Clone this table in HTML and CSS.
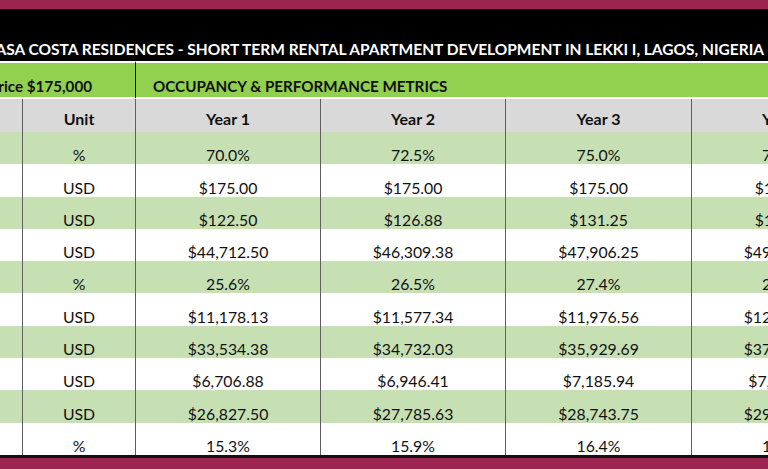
FILE: index.html
```html
<!DOCTYPE html>
<html lang="en">
<head>
<meta charset="utf-8">
<title>Casa Costa Residences - Occupancy &amp; Performance Metrics</title>
<link rel="stylesheet" href="styles.css">
</head>
<body>
<div class="sheet">
  <div class="band band-top"></div>
  <div class="title-bar">
    <span class="title">CASA COSTA RESIDENCES - SHORT TERM RENTAL APARTMENT DEVELOPMENT IN LEKKI I, LAGOS, NIGERIA</span>
  </div>
  <div class="grid">
    <div class="sec sec-price"><span>Purchase Price $175,000</span></div>
    <div class="sec sec-metrics">OCCUPANCY &amp; PERFORMANCE METRICS</div>

    <div class="cell head c1"></div>
    <div class="cell head c2">Unit</div>
    <div class="cell head c3">Year 1</div>
    <div class="cell head c4">Year 2</div>
    <div class="cell head c5">Year 3</div>
    <div class="cell head c6">Year 4</div>

    <div class="cell g c1"></div><div class="cell g c2">%</div><div class="cell g c3">70.0%</div><div class="cell g c4">72.5%</div><div class="cell g c5">75.0%</div><div class="cell g c6">77.5%</div>
    <div class="cell w c1"></div><div class="cell w c2">USD</div><div class="cell w c3">$175.00</div><div class="cell w c4">$175.00</div><div class="cell w c5">$175.00</div><div class="cell w c6">$175.00</div>
    <div class="cell g c1"></div><div class="cell g c2">USD</div><div class="cell g c3">$122.50</div><div class="cell g c4">$126.88</div><div class="cell g c5">$131.25</div><div class="cell g c6">$135.63</div>
    <div class="cell w c1"></div><div class="cell w c2">USD</div><div class="cell w c3">$44,712.50</div><div class="cell w c4">$46,309.38</div><div class="cell w c5">$47,906.25</div><div class="cell w c6">$49,503.13</div>
    <div class="cell g c1"></div><div class="cell g c2">%</div><div class="cell g c3">25.6%</div><div class="cell g c4">26.5%</div><div class="cell g c5">27.4%</div><div class="cell g c6">28.3%</div>
    <div class="cell w c1"></div><div class="cell w c2">USD</div><div class="cell w c3">$11,178.13</div><div class="cell w c4">$11,577.34</div><div class="cell w c5">$11,976.56</div><div class="cell w c6">$12,375.78</div>
    <div class="cell g c1"></div><div class="cell g c2">USD</div><div class="cell g c3">$33,534.38</div><div class="cell g c4">$34,732.03</div><div class="cell g c5">$35,929.69</div><div class="cell g c6">$37,127.34</div>
    <div class="cell w c1"></div><div class="cell w c2">USD</div><div class="cell w c3">$6,706.88</div><div class="cell w c4">$6,946.41</div><div class="cell w c5">$7,185.94</div><div class="cell w c6">$7,425.47</div>
    <div class="cell g c1"></div><div class="cell g c2">USD</div><div class="cell g c3">$26,827.50</div><div class="cell g c4">$27,785.63</div><div class="cell g c5">$28,743.75</div><div class="cell g c6">$29,701.88</div>
    <div class="cell w c1"></div><div class="cell w c2">%</div><div class="cell w c3">15.3%</div><div class="cell w c4">15.9%</div><div class="cell w c5">16.4%</div><div class="cell w c6">17.0%</div>
  </div>
  <div class="band-bottom-line"></div>
  <div class="band band-bottom"></div>
</div>
</body>
</html>
```

FILE: styles.css
```css
* { box-sizing: border-box; }
html, body { margin: 0; padding: 0; background: #ffffff; }
body {
  width: 768px;
  height: 469px;
  overflow: hidden;
  font-family: "Lato", "Liberation Sans", sans-serif;
  color: #111111;
}
.sheet {
  width: 768px;
  height: 469px;
  overflow: hidden;
  display: flex;
  flex-direction: column;
}
.band { background: #9b2451; flex: none; }
.band-top { height: 10px; border-bottom: 1px solid #2a0a14; }
.band-bottom { height: 10px; flex: 1 1 auto; }
.band-bottom-line { height: 3px; background: #111111; flex: none; }

.title-bar {
  height: 51px;
  background: #000000;
  display: flex;
  justify-content: flex-end;
  align-items: flex-end;
  padding-right: 4px;
  padding-bottom: 2px;
  overflow: hidden;
  white-space: nowrap;
  flex: none;
}
.title {
  color: #ffffff;
  font-weight: 700;
  font-size: 15.5px;
  line-height: 20px;
}

.grid {
  width: 876px;
  display: grid;
  grid-template-columns: 22px 113px 185px 185px 186px 185px;
  grid-template-rows: 38px 33px repeat(10, 32.3px);
  flex: none;
}
.sec {
  background: #92d050;
  border-top: 2px solid #ffffff;
  border-bottom: 2px solid #ffffff;
  font-weight: 700;
  font-size: 15.2px;
  line-height: 20px;
  display: flex;
  align-items: flex-end;
  padding-bottom: 1px;
  white-space: nowrap;
  overflow: hidden;
  color: #111111;
}
.sec-price {
  grid-column: 1 / 3;
  justify-content: flex-end;
  padding-right: 43px;
}
.sec-metrics {
  grid-column: 3 / 7;
  border-left: 1px solid #000000;
  padding-left: 17px;
}

.cell {
  display: flex;
  align-items: flex-end;
  justify-content: center;
  white-space: nowrap;
  font-size: 15.8px;
  line-height: 18px;
  padding-bottom: 0;
}
.cell.c2, .cell.c3, .cell.c4, .cell.c5, .cell.c6 { border-left: 1px solid #5f5f5f; }
.head {
  background: #d9d9d9;
  font-weight: 700;
  font-size: 16px;
  line-height: 20px;
  padding-bottom: 3px;
}
.g { background: #c6e0b4; }
.w { background: #ffffff; }
```
